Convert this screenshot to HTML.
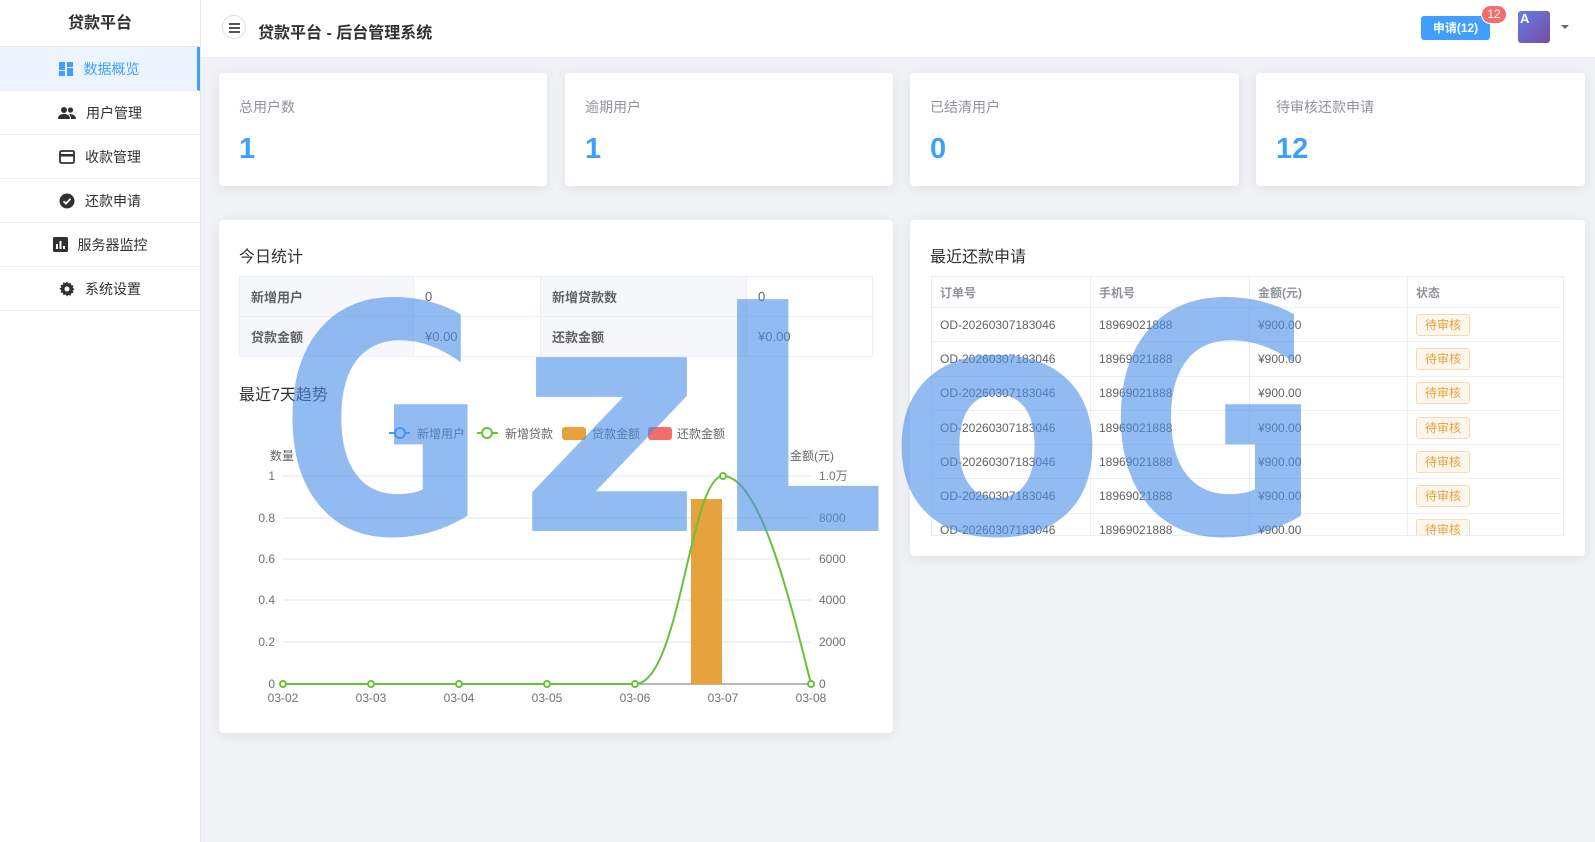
<!DOCTYPE html>
<html><head><meta charset="utf-8"><style>
*{margin:0;padding:0;box-sizing:border-box}
body{width:1595px;height:842px;background:#f0f2f5;font-family:"Liberation Sans","Noto Sans CJK SC",sans-serif;position:relative;overflow:hidden;color:#303133}
.side{position:absolute;left:0;top:0;width:201px;height:842px;background:#fff;border-right:1px solid #e6e6e6}
.logo{height:47px;line-height:47px;text-align:center;font-size:16px;font-weight:bold;border-bottom:1px solid #e6e6e6}
.mi{height:44px;border-bottom:1px solid #f0f0f0;display:flex;align-items:center;justify-content:center;font-size:14px;color:#303133;gap:10px}
.mi.act{background:#ecf5ff;color:#409eff;border-right:3px solid #409eff}
.hdr{position:absolute;left:201px;top:0;right:0;height:57px;background:#fff}
.card{position:absolute;background:#fff;border-radius:4px;box-shadow:0 2px 12px rgba(0,0,0,.08)}
.st .lb{position:absolute;left:20px;top:24px;font-size:14px;color:#909399}
.st .nm{position:absolute;left:20px;top:60px;font-size:29px;font-weight:bold;color:#409eff}
.ttl{position:absolute;left:20px;font-size:16px;color:#303133}
table{border-collapse:collapse;position:absolute}
td,th{border:1px solid #ebeef5;font-size:13px}
.t1 td{height:40px;padding-left:11px;color:#606266}
.t1 td.k{background:#f5f7fa;font-weight:bold;color:#606266}
.t2 th{height:31px;text-align:left;padding-left:8px;color:#909399;font-size:12px}
.t2 td{height:34.3px;padding-left:8px;color:#606266;font-size:12px}
.tag{display:inline-block;border:1px solid #f5dab1;background:#fdf6ec;color:#e6a23c;font-size:12px;padding:0 8px;height:22px;line-height:20px;border-radius:3px}
</style></head><body>
<div class="side">
<div class="logo">贷款平台</div>
<div class="mi act"><svg width="16" height="16" viewBox="0 0 16 16"><rect x="1" y="1" width="6" height="8" fill="#409eff"/><rect x="1" y="10" width="6" height="5" fill="#409eff"/><rect x="9" y="1" width="6" height="5" fill="#409eff"/><rect x="9" y="7" width="6" height="8" fill="#409eff"/></svg>数据概览</div>
<div class="mi"><svg width="18" height="14" viewBox="0 0 18 14"><circle cx="6" cy="4" r="3" fill="#303133"/><circle cx="12.5" cy="4" r="2.6" fill="#303133"/><path d="M0 13c0-4 3-5 6-5s6 1 6 5z M11 8c3 0 7 1 7 5h-5c0-2-1-4-2-5z" fill="#303133"/></svg>用户管理</div>
<div class="mi"><svg width="16" height="14" viewBox="0 0 16 14"><rect x="1" y="1" width="14" height="12" rx="1.5" fill="none" stroke="#303133" stroke-width="1.8"/><rect x="1" y="4" width="14" height="2.5" fill="#303133"/></svg>收款管理</div>
<div class="mi"><svg width="16" height="16" viewBox="0 0 16 16"><circle cx="8" cy="8" r="7.5" fill="#303133"/><path d="M4.5 8.2l2.4 2.4 4.6-4.8" stroke="#fff" stroke-width="1.8" fill="none"/></svg>还款申请</div>
<div class="mi"><svg width="15" height="15" viewBox="0 0 15 15"><rect width="15" height="15" rx="1.5" fill="#303133"/><rect x="3" y="7" width="2" height="5" fill="#fff"/><rect x="6.5" y="4" width="2" height="8" fill="#fff"/><rect x="10" y="9" width="2" height="3" fill="#fff"/></svg>服务器监控</div>
<div class="mi"><svg width="16" height="16" viewBox="0 0 16 16"><path d="M8 0.5l1.4 2 2.3-.8.4 2.4 2.4.4-.8 2.3 2 1.4-2 1.4.8 2.3-2.4.4-.4 2.4-2.3-.8L8 15.5l-1.4-2-2.3.8-.4-2.4-2.4-.4.8-2.3-2-1.4 2-1.4-.8-2.3 2.4-.4.4-2.4 2.3.8z" fill="#303133"/><circle cx="8" cy="8" r="2.5" fill="#fff"/></svg>系统设置</div>
</div>
<div class="hdr">
<div style="position:absolute;left:21px;top:15px;width:24px;height:24px;border:1px solid #dcdfe6;border-radius:50%"><div style="position:absolute;left:6px;top:7px;width:11px;height:1.6px;background:#555;box-shadow:0 4px 0 #555,0 8px 0 #555"></div></div>
<div style="position:absolute;left:57px;top:19px;font-size:16px;font-weight:bold">贷款平台 - 后台管理系统</div>
<div style="position:absolute;left:1220px;top:16px;width:69px;height:24px;background:#409eff;border-radius:3px;color:#fff;font-size:12px;font-weight:bold;text-align:center;line-height:24px">申请(12)</div>
<div style="position:absolute;left:1280px;top:5px;width:26px;height:19px;background:#f56c6c;border-radius:10px;color:#fff;font-size:12px;text-align:center;line-height:17px;border:1px solid #fff">12</div>
<div style="position:absolute;left:1317px;top:11px;width:32px;height:32px;border-radius:3px;background:linear-gradient(135deg,#667eea,#764ba2);color:#fff;font-size:13px;font-weight:bold;padding-left:2px;line-height:16px">A</div>
<div style="position:absolute;left:1360px;top:25px;border:4px solid transparent;border-top:4px solid #666"></div>
</div>

<div class="card st" style="left:219px;top:73px;width:328px;height:113px"><div class="lb">总用户数</div><div class="nm">1</div></div>
<div class="card st" style="left:565px;top:73px;width:328px;height:113px"><div class="lb">逾期用户</div><div class="nm">1</div></div>
<div class="card st" style="left:910px;top:73px;width:329px;height:113px"><div class="lb">已结清用户</div><div class="nm">0</div></div>
<div class="card st" style="left:1256px;top:73px;width:329px;height:113px"><div class="lb">待审核还款申请</div><div class="nm">12</div></div>

<div class="card" style="left:219px;top:220px;width:674px;height:513px">
<div class="ttl" style="top:23px">今日统计</div>
<table class="t1" style="left:20px;top:56px;width:634px">
<tr><td class="k" style="width:174px">新增用户</td><td style="width:127px">0</td><td class="k" style="width:206px">新增贷款数</td><td>0</td></tr>
<tr><td class="k">贷款金额</td><td>¥0.00</td><td class="k">还款金额</td><td>¥0.00</td></tr>
</table>
<div class="ttl" style="top:161px">最近7天趋势</div>
</div>

<svg style="position:absolute;left:0;top:0" width="1595" height="842" font-family="Liberation Sans,Noto Sans CJK SC,sans-serif">
<g font-size="12" fill="#666">
<line x1="389" y1="433" x2="410" y2="433" stroke="#409eff" stroke-width="2"/><circle cx="400" cy="433" r="5" fill="#fff" stroke="#409eff" stroke-width="2"/><text x="417" y="438">新增用户</text>
<line x1="477" y1="433" x2="498" y2="433" stroke="#67c23a" stroke-width="2"/><circle cx="487" cy="433" r="5" fill="#fff" stroke="#67c23a" stroke-width="2"/><text x="505" y="438">新增贷款</text>
<rect x="562" y="427" width="24" height="13" rx="3" fill="#e6a23c"/><text x="592" y="438">贷款金额</text>
<rect x="648" y="427" width="24" height="13" rx="3" fill="#f56c6c"/><text x="677" y="438">还款金额</text>
<text x="270" y="460">数量</text><text x="790" y="460">金额(元)</text>
</g>
<g stroke="#e0e6f1" stroke-width="1">
<line x1="283" y1="476" x2="811" y2="476"/><line x1="283" y1="518" x2="811" y2="518"/><line x1="283" y1="559" x2="811" y2="559"/><line x1="283" y1="600" x2="811" y2="600"/><line x1="283" y1="642" x2="811" y2="642"/>
</g>
<line x1="283" y1="684" x2="811" y2="684" stroke="#6e7079"/>
<g font-size="12" fill="#6e7079" text-anchor="end">
<text x="275" y="480">1</text><text x="275" y="522">0.8</text><text x="275" y="563">0.6</text><text x="275" y="604">0.4</text><text x="275" y="646">0.2</text><text x="275" y="688">0</text>
</g>
<g font-size="12" fill="#6e7079">
<text x="819" y="480">1.0万</text><text x="819" y="522">8000</text><text x="819" y="563">6000</text><text x="819" y="604">4000</text><text x="819" y="646">2000</text><text x="819" y="688">0</text>
</g>
<g font-size="12" fill="#6e7079" text-anchor="middle">
<text x="283" y="702">03-02</text><text x="371" y="702">03-03</text><text x="459" y="702">03-04</text><text x="547" y="702">03-05</text><text x="635" y="702">03-06</text><text x="723" y="702">03-07</text><text x="811" y="702">03-08</text>
</g>
<rect x="691" y="499" width="31" height="185" fill="#e6a23c"/>
<path d="M283 684H635C680 684 690 476 723 476C760 476 790 600 811 684" fill="none" stroke="#67c23a" stroke-width="2"/>
<g fill="#fff" stroke="#67c23a" stroke-width="2"><circle cx="283" cy="684" r="3"/><circle cx="371" cy="684" r="3"/><circle cx="459" cy="684" r="3"/><circle cx="547" cy="684" r="3"/><circle cx="635" cy="684" r="3"/><circle cx="723" cy="476" r="3"/><circle cx="811" cy="684" r="3"/></g>
</svg>

<div class="card" style="left:910px;top:220px;width:675px;height:336px">
<div class="ttl" style="top:23px">最近还款申请</div>
<div style="position:absolute;left:21px;top:56px;width:633px;height:260px;overflow:hidden;border-bottom:1px solid #ebeef5">
<table class="t2" style="position:static;width:633px">
<tr><th style="width:159px">订单号</th><th style="width:159px">手机号</th><th style="width:158px">金额(元)</th><th>状态</th></tr>
<tr><td>OD-20260307183046</td><td>18969021888</td><td>¥900.00</td><td><span class="tag">待审核</span></td></tr>
<tr><td>OD-20260307183046</td><td>18969021888</td><td>¥900.00</td><td><span class="tag">待审核</span></td></tr>
<tr><td>OD-20260307183046</td><td>18969021888</td><td>¥900.00</td><td><span class="tag">待审核</span></td></tr>
<tr><td>OD-20260307183046</td><td>18969021888</td><td>¥900.00</td><td><span class="tag">待审核</span></td></tr>
<tr><td>OD-20260307183046</td><td>18969021888</td><td>¥900.00</td><td><span class="tag">待审核</span></td></tr>
<tr><td>OD-20260307183046</td><td>18969021888</td><td>¥900.00</td><td><span class="tag">待审核</span></td></tr>
<tr><td>OD-20260307183046</td><td>18969021888</td><td>¥900.00</td><td><span class="tag">待审核</span></td></tr>
</table></div>
</div>

<svg style="position:absolute;left:0;top:0;pointer-events:none" width="1595" height="842">
<g fill="#4a8ee8" fill-opacity="0.6" font-family="DejaVu Sans,sans-serif" font-weight="bold" font-size="318">
<text x="280" y="533" textLength="206" lengthAdjust="spacingAndGlyphs">G</text>
<text x="518" y="531" textLength="184" lengthAdjust="spacingAndGlyphs">z</text>
<text x="712" y="531" textLength="174" lengthAdjust="spacingAndGlyphs">L</text>
<text x="888" y="533" textLength="218" lengthAdjust="spacingAndGlyphs">o</text>
<text x="1108" y="533" textLength="212" lengthAdjust="spacingAndGlyphs">G</text>
</g></svg>
</body></html>
